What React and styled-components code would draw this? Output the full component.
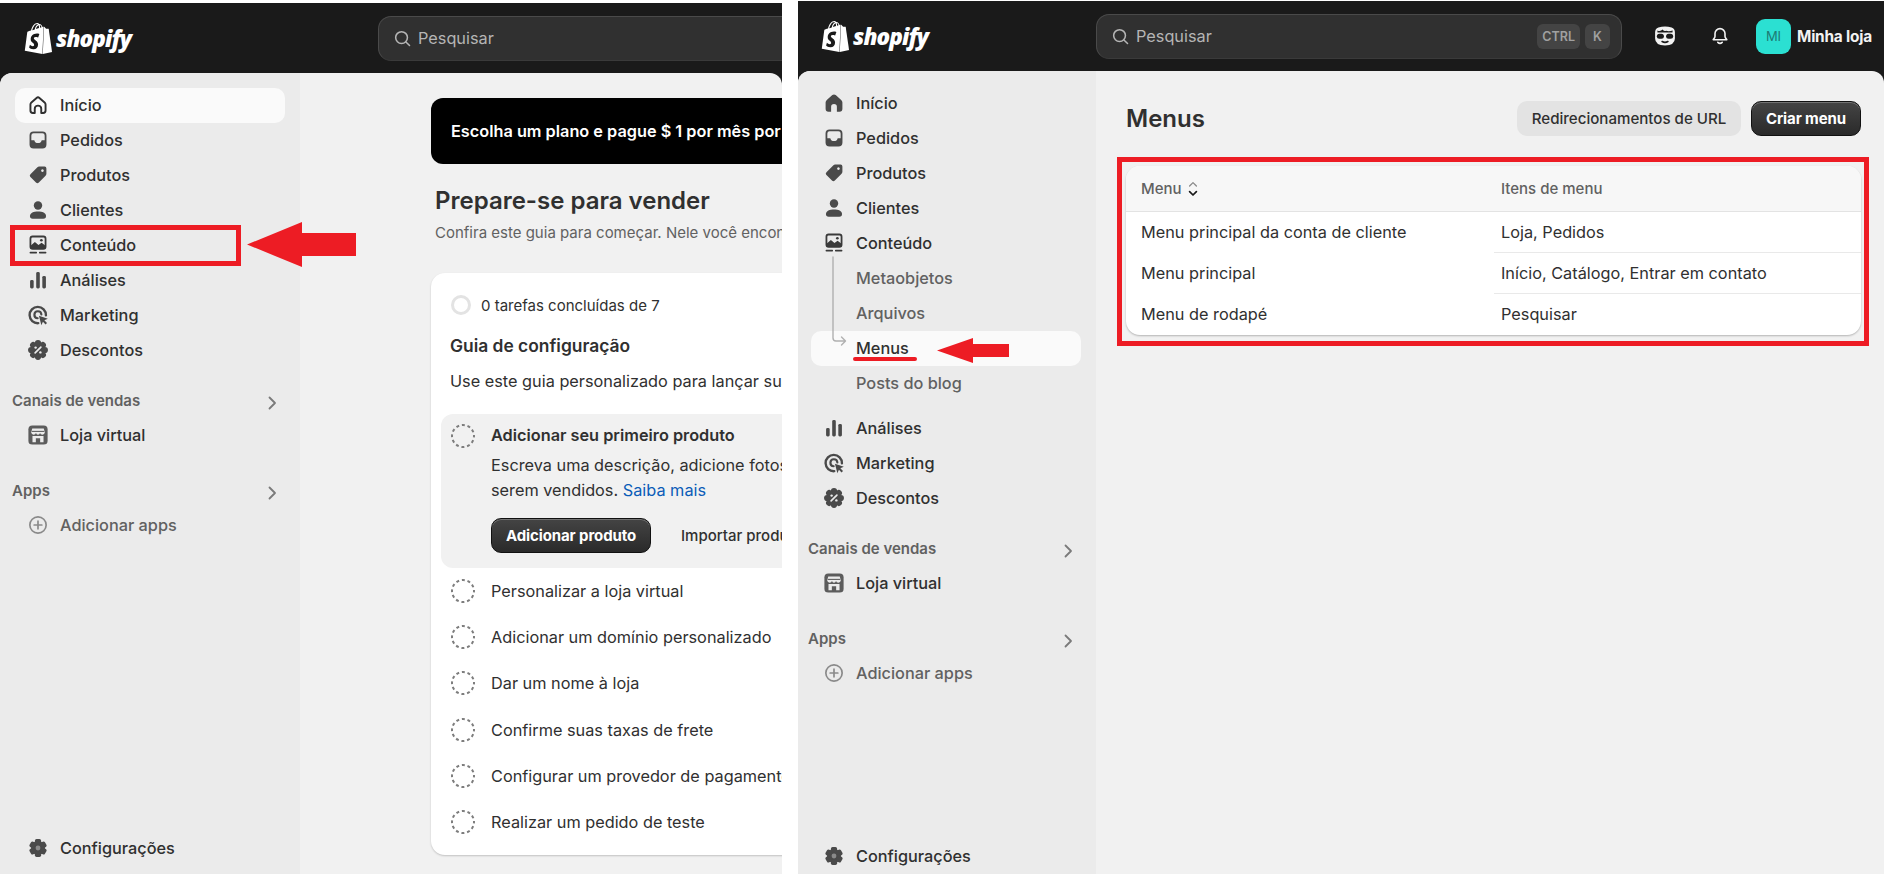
import React from "react";
import styled, { createGlobalStyle } from "styled-components";
import { SiShopify } from "react-icons/si";

const INK = "#303030";
const MUTED = "#616161";
const RED = "#ed1c24";

////////////////////////// ICONS //////////////////////////
const Svg = ({ size = 24, children, color = "#4a4a4a" }) => (
  <svg width={size} height={size} viewBox="0 0 20 20" fill={color} stroke="none">
    {children}
  </svg>
);

const HomeLine = () => (
  <Svg color={INK}>
    <path
      d="M3.7 9.6q0-1 .8-1.7l4.3-3.8q1.2-1 2.4 0l4.3 3.8q.8.7.8 1.7v5q0 2-2 2h-1.6v-3.4a2.5 2.5 0 0 0-5.4 0v3.4H5.7q-2 0-2-2z"
      fill="none"
      stroke={INK}
      strokeWidth="1.6"
      strokeLinejoin="round"
    />
  </Svg>
);
const HomeFill = () => (
  <Svg>
    <path d="M3 9.6q0-1.3 1-2.2l4.6-4q1.4-1.1 2.8 0l4.6 4q1 .9 1 2.2v5.2q0 2.4-2.4 2.4h-2.2v-4a2.4 2.4 0 0 0-4.8 0v4H5.4Q3 17.2 3 14.8z" />
  </Svg>
);
const Orders = () => (
  <Svg>
    <rect x="3.7" y="3.7" width="12.6" height="12.6" rx="2.6" fill="none" stroke="#4a4a4a" strokeWidth="1.5" />
    <path d="M3.5 10.2h3.4q.6 2.4 3.1 2.4t3.1-2.4h3.4V14q0 2.5-2.5 2.5H6Q3.5 16.5 3.5 14z" />
  </Svg>
);
const Tag = () => (
  <Svg>
    <path
      fillRule="evenodd"
      d="M11 3h4.5Q17 3 17 4.5V9q0 1-.7 1.7l-5.6 5.6q-1.2 1.2-2.4 0l-4.6-4.6q-1.2-1.2 0-2.4l5.6-5.6Q10 3 11 3zm2.7 2.3a1.1 1.1 0 1 0 .01 0z"
    />
  </Svg>
);
const Person = () => (
  <Svg>
    <circle cx="10" cy="6.3" r="3.5" />
    <path d="M3.3 15c0-2.6 3.1-3.8 6.7-3.8s6.7 1.2 6.7 3.8q0 2.2-2.2 2.2h-9Q3.3 17.2 3.3 15z" />
  </Svg>
);
const Content = ({ color = "#3a3a3a" }) => (
  <Svg color={color}>
    <rect x="3.7" y="2.9" width="12.6" height="10.4" rx="1.8" fill="none" stroke={color} strokeWidth="1.5" />
    <path d="M4 10.4l3.4-2.8 3 2.4 2.6-1.8 3 2.2v2.4H4z" />
    <circle cx="12.8" cy="6" r="1.1" />
    <rect x="3" y="15.6" width="6.2" height="1.5" rx=".6" />
    <rect x="10.8" y="15.6" width="6.2" height="1.5" rx=".6" />
  </Svg>
);
const Bars = () => (
  <Svg>
    <rect x="3.4" y="10" width="3" height="7" rx="1.2" />
    <rect x="8.5" y="3.4" width="3" height="13.6" rx="1.2" />
    <rect x="13.6" y="6.6" width="3" height="10.4" rx="1.2" />
  </Svg>
);
const Target = () => (
  <Svg>
    <path d="M16.6 10.2a6.8 6.8 0 1 0-6.4 6.6" fill="none" stroke="#4a4a4a" strokeWidth="2" strokeLinecap="round" />
    <path d="M12.8 9.6a2.9 2.9 0 1 0-3.1 3.1" fill="none" stroke="#4a4a4a" strokeWidth="1.8" strokeLinecap="round" />
    <path d="M10.8 10.6l7.4 2.5-2.9 1.3 2.2 2.3-1.2 1.2-2.2-2.3-1.3 2.9z" />
  </Svg>
);
const Discount = () => (
  <Svg>
    <circle cx="10" cy="10" r="6.4" />
    {[0, 45, 90, 135, 180, 225, 270, 315].map(a => (
      <circle key={a} cx="10" cy="4.3" r="2.6" transform={`rotate(${a} 10 10)`} />
    ))}
    <path d="M12.4 7.6l-4.8 4.8" stroke="#ebebeb" strokeWidth="1.4" strokeLinecap="round" />
    <circle cx="8" cy="8" r="1" fill="#ebebeb" />
    <circle cx="12" cy="12" r="1" fill="#ebebeb" />
  </Svg>
);
const Gear = () => (
  <Svg>
    <circle cx="10" cy="10" r="5.8" />
    {[0, 60, 120, 180, 240, 300].map(a => (
      <rect key={a} x="7.4" y="2.6" width="5.2" height="4.6" rx="1.4" transform={`rotate(${a} 10 10)`} />
    ))}
    <circle cx="10" cy="10" r="2" fill="#8a8a8a" />
  </Svg>
);
const Store = () => (
  <Svg>
    <rect x="2" y="2" width="16" height="16" rx="3.2" fill="#5c5c5c" />
    <path d="M5.2 4.6h9.6l.9 3.4q-.3 1.7-2 1.7t-2-1.3q-.5 1.3-1.7 1.3T8.3 8.4q-.4 1.3-2 1.3T4.3 8z" fill="#ebebeb" />
    <path d="M5.4 10.8h9.2v5.2h-2.8v-3.2H8.2V16H5.4z" fill="#ebebeb" />
    <path d="M4.8 7h10.4" stroke="#5c5c5c" strokeWidth=".9" />
  </Svg>
);
const PlusCircle = () => (
  <Svg>
    <circle cx="10" cy="10" r="6.8" fill="none" stroke="#8a8a8a" strokeWidth="1.4" />
    <path d="M10 6.8v6.4M6.8 10h6.4" stroke="#8a8a8a" strokeWidth="1.4" strokeLinecap="round" />
  </Svg>
);
const Chevron = () => (
  <svg width="12" height="16" viewBox="0 0 12 16" fill="none" stroke="#7a7a7a" strokeWidth="1.8" strokeLinecap="round" strokeLinejoin="round">
    <path d="M3.5 2.5L9 8l-5.5 5.5" />
  </svg>
);
const SearchGlyph = () => (
  <svg width="19" height="19" viewBox="0 0 20 20" fill="none" stroke="#b5b5b5" strokeWidth="1.6" strokeLinecap="round">
    <circle cx="9" cy="9" r="6.2" />
    <path d="M13.6 13.6L17.4 17.4" />
  </svg>
);
const Face = () => (
  <svg width="22" height="22" viewBox="0 0 20 20">
    <path d="M4 2.2q6-1.6 12 0 3 1 3 4.4v5.6q0 6-9 6.4-9-.4-9-6.4V6.6q0-3.4 3-4.4z" fill="#f2f2f2" />
    <path d="M3 4.9q2.8 1.4 4.8-.7 1 1.8 3.2 1 2.6 1 6-.3l-.2 1.9H3.2z" fill="#1a1a1a" />
    <rect x="2.6" y="8" width="6.4" height="4.6" rx="2.3" fill="#1a1a1a" />
    <rect x="11" y="8" width="6.4" height="4.6" rx="2.3" fill="#1a1a1a" />
    <path d="M7.4 15q2.6 1.5 5.2 0" stroke="#1a1a1a" strokeWidth="1.5" fill="none" strokeLinecap="round" />
  </svg>
);
const Bell = () => (
  <svg width="20" height="20" viewBox="0 0 20 20" fill="none" stroke="#f2f2f2" strokeWidth="1.6" strokeLinejoin="round" strokeLinecap="round">
    <path d="M10 2.6a5 5 0 0 0-5 5v2.6q0 1-.8 2l-1 1.5h13.6l-1-1.5q-.8-1-.8-2V7.6a5 5 0 0 0-5-5z" />
    <path d="M7.8 16.4q2.2 2 4.4 0" />
  </svg>
);
const Sort = () => (
  <svg width="12" height="18" viewBox="0 0 12 18" fill="none" strokeLinecap="round" strokeLinejoin="round">
    <path d="M2.6 6L6 2.6 9.4 6" stroke="#8a8a8a" strokeWidth="1.3" />
    <path d="M2.6 11.6L6 15l3.4-3.4" stroke="#1a1a1a" strokeWidth="1.7" />
  </svg>
);
const Dashed = () => (
  <svg width="26" height="26" viewBox="0 0 26 26" fill="none" stroke="#7d7d7d" strokeWidth="2">
    <circle cx="13" cy="13" r="11" strokeDasharray="3 2.76" strokeDashoffset="1.5" />
  </svg>
);

////////////////////////// DATA //////////////////////////
const topItems = [
  ["Pedidos", Orders],
  ["Produtos", Tag],
  ["Clientes", Person],
];
const lowerItems = [
  ["Análises", Bars],
  ["Marketing", Target],
  ["Descontos", Discount],
];
const tasks = [
  "Personalizar a loja virtual",
  "Adicionar um domínio personalizado",
  "Dar um nome à loja",
  "Confirme suas taxas de frete",
  "Configurar um provedor de pagamento",
  "Realizar um pedido de teste",
];
const menus = [
  ["Menu principal da conta de cliente", "Loja, Pedidos"],
  ["Menu principal", "Início, Catálogo, Entrar em contato"],
  ["Menu de rodapé", "Pesquisar"],
];

////////////////////////// PARTS //////////////////////////
const Brand = ({ width, inset }) => (
  <BrandSlot $width={width} $inset={inset}>
    <SiShopify size={31} color="#fff" />
    <Wordmark>shopify</Wordmark>
  </BrandSlot>
);

const NavRow = ({ icon: Icon, children, active }) => (
  <NavItem $active={active}>
    <IconSlot>
      <Icon />
    </IconSlot>
    {children}
  </NavItem>
);

const Channels = () => (
  <>
    <SectionHead>
      Canais de vendas
      <Chevron />
    </SectionHead>
    <NavRow icon={Store}>Loja virtual</NavRow>
    <SectionHead $apps>
      Apps
      <Chevron />
    </SectionHead>
    <NavRow icon={PlusCircle}>
      <Faded>Adicionar apps</Faded>
    </NavRow>
    <Spacer />
    <NavRow icon={Gear}>Configurações</NavRow>
  </>
);

const Arrow = ({ width, height, neck, shaftTop, shaftBottom }) => (
  <svg width={width} height={height} viewBox={`0 0 ${width} ${height}`} fill={RED}>
    <polygon
      points={`0,${height / 2} ${neck},0 ${neck},${shaftTop} ${width},${shaftTop} ${width},${shaftBottom} ${neck},${shaftBottom} ${neck},${height}`}
    />
  </svg>
);

const GuidePanel = () => (
  <Panel $width="782px" $top="3px">
    <TopBar>
      <Brand width="378px" inset="23px" />
      <SearchBox $width="526px">
        <SearchGlyph />
        Pesquisar
      </SearchBox>
    </TopBar>
    <Body>
      <Sidebar $width="300px" $inset="15px" $bottom="8px">
        <NavRow icon={HomeLine} active>
          Início
        </NavRow>
        {topItems.map(([label, icon]) => (
          <NavRow key={label} icon={icon}>
            {label}
          </NavRow>
        ))}
        <NavRow icon={Content}>Conteúdo</NavRow>
        {lowerItems.map(([label, icon]) => (
          <NavRow key={label} icon={icon}>
            {label}
          </NavRow>
        ))}
        <Channels />
      </Sidebar>
      <GuideMain>
        <Banner>Escolha um plano e pague $ 1 por mês por 3 meses</Banner>
        <Heading>Prepare-se para vender</Heading>
        <Lead>Confira este guia para começar. Nele você encontrará tudo o que precisa</Lead>
        <GuideCard>
          <Progress>
            <ProgressRing />0 tarefas concluídas de 7
          </Progress>
          <GuideTitle>Guia de configuração</GuideTitle>
          <GuideIntro>Use este guia personalizado para lançar sua loja virtual</GuideIntro>
          <OpenTask>
            <Dashed />
            <div>
              <TaskTitle>Adicionar seu primeiro produto</TaskTitle>
              <TaskText>
                Escreva uma descrição, adicione fotos e defina o preço dos produtos a
                <br />
                serem vendidos. <TaskLink>Saiba mais</TaskLink>
              </TaskText>
              <TaskActions>
                <DarkButton $width="160px">Adicionar produto</DarkButton>
                <PlainAction>Importar produtos</PlainAction>
              </TaskActions>
            </div>
          </OpenTask>
          {tasks.map(task => (
            <Task key={task}>
              <Dashed />
              {task}
            </Task>
          ))}
        </GuideCard>
      </GuideMain>
    </Body>
    <RedFrame $left="10px" $top="222px" $width="231px" $height="41px" />
    <Overlay $left="247px" $top="219px">
      <Arrow width={109} height={45} neck={55} shaftTop={11} shaftBottom={34} />
    </Overlay>
  </Panel>
);

const MenusPanel = () => (
  <Panel $width="1086px" $top="1px">
    <TopBar>
      <Brand width="298px" inset="22px" />
      <SearchBox $width="526px">
        <SearchGlyph />
        Pesquisar
        <Keys>
          <Key>CTRL</Key>
          <Key>K</Key>
        </Keys>
      </SearchBox>
      <Account>
        <HeaderIcon $gap="34px">
          <Face />
        </HeaderIcon>
        <HeaderIcon $gap="26px">
          <Bell />
        </HeaderIcon>
        <Avatar>MI</Avatar>
        <StoreName>Minha loja</StoreName>
      </Account>
    </TopBar>
    <Body>
      <Sidebar $width="298px" $inset="13px" $bottom="0">
        <NavRow icon={HomeFill}>Início</NavRow>
        {topItems.map(([label, icon]) => (
          <NavRow key={label} icon={icon}>
            {label}
          </NavRow>
        ))}
        <NavRow icon={Content}>Conteúdo</NavRow>
        <SubNav>
          <Tree width="24" height="90" viewBox="0 0 24 90" fill="none" stroke="#b0b0b0" strokeWidth="1.4" strokeLinecap="round" strokeLinejoin="round">
            <path d="M9 1v81q0 3 3 3h9M17.5 81l4 4-4 4" />
          </Tree>
          <SubItem>Metaobjetos</SubItem>
          <SubItem>Arquivos</SubItem>
          <SubItem $active>Menus</SubItem>
          <SubItem>Posts do blog</SubItem>
        </SubNav>
        {lowerItems.map(([label, icon]) => (
          <NavRow key={label} icon={icon}>
            {label}
          </NavRow>
        ))}
        <Channels />
      </Sidebar>
      <MenusMain>
        <PageHead>
          <Heading as="h2" $flush>
            Menus
          </Heading>
          <HeadActions>
            <GreyButton>Redirecionamentos de URL</GreyButton>
            <DarkButton $width="110px">Criar menu</DarkButton>
          </HeadActions>
        </PageHead>
        <TableCard>
          <HeadRow>
            <HeadCell>
              Menu <Sort />
            </HeadCell>
            <HeadCell $second>Itens de menu</HeadCell>
          </HeadRow>
          {menus.map(([name, items], i) => (
            <Row key={name}>
              <NameCell>{name}</NameCell>
              <ItemsCell $line={i < menus.length - 1}>{items}</ItemsCell>
            </Row>
          ))}
        </TableCard>
      </MenusMain>
    </Body>
    <RedFrame $left="319px" $top="156px" $width="752px" $height="189px" />
    <Overlay $left="139px" $top="337px">
      <Arrow width={72} height={25} neck={36} shaftTop={6} shaftBottom={19} />
    </Overlay>
    <Underline />
  </Panel>
);

export default function App() {
  return (
    <Screen>
      <GlobalStyle />
      <GuidePanel />
      <MenusPanel />
    </Screen>
  );
}

////////////////////////// CSS //////////////////////////
const GlobalStyle = createGlobalStyle`
  html, body {
    margin: 0;
    background: #fff;
    overflow: hidden;
  }
  * {
    box-sizing: border-box;
  }
`;

const Screen = styled.div`
  display: flex;
  gap: 16px;
  width: 1884px;
  height: 874px;
  overflow: hidden;
  font-family: Inter, "Liberation Sans", sans-serif;
  font-size: 16.3px;
  color: ${INK};
`;

const Panel = styled.div`
  position: relative;
  flex: none;
  display: flex;
  flex-direction: column;
  width: ${p => p.$width};
  margin-top: ${p => p.$top};
  overflow: hidden;
  background: #1a1a1a;
`;

const TopBar = styled.div`
  flex: none;
  display: flex;
  align-items: center;
  height: 70px;
`;

const BrandSlot = styled.div`
  flex: none;
  display: flex;
  align-items: center;
  gap: 2px;
  width: ${p => p.$width};
  padding-left: ${p => p.$inset};
`;

const Wordmark = styled.span`
  font-family: "Open Sans", sans-serif;
  font-style: italic;
  font-weight: 800;
  font-size: 22.5px;
  letter-spacing: -0.9px;
  color: #fff;
`;

const SearchBox = styled.div`
  flex: none;
  display: flex;
  align-items: center;
  gap: 6px;
  width: ${p => p.$width};
  height: 45px;
  padding: 0 11px 0 14px;
  border: 1px solid #4a4a4a;
  border-bottom-color: #3a3a3a;
  border-radius: 13px;
  background: #303030;
  color: #b5b5b5;
`;

const Keys = styled.div`
  display: flex;
  gap: 5px;
  margin-left: auto;
`;

const Key = styled.span`
  display: flex;
  align-items: center;
  justify-content: center;
  min-width: 25px;
  height: 25px;
  padding: 0 5px;
  border-radius: 6px;
  background: #444;
  color: #a0a0a0;
  font-size: 12.5px;
  font-weight: 600;
`;

const Account = styled.div`
  display: flex;
  align-items: center;
  flex: 1;
  padding-left: 32px;
`;

const HeaderIcon = styled.span`
  display: flex;
  margin-right: ${p => p.$gap};
`;

const Avatar = styled.span`
  display: flex;
  align-items: center;
  justify-content: center;
  width: 35px;
  height: 35px;
  border-radius: 9px;
  background: #2be0d2;
  color: #1d7a74;
  font-size: 13px;
`;

const StoreName = styled.span`
  margin-left: 6px;
  color: #f2f2f2;
  font-size: 15.4px;
  font-weight: 700;
  letter-spacing: -0.2px;
  white-space: nowrap;
`;

const Body = styled.div`
  flex: 1;
  min-height: 0;
  display: flex;
  overflow: hidden;
  border-radius: 12px 12px 0 0;
  background: #f1f1f1;
`;

const Sidebar = styled.nav`
  flex: none;
  display: flex;
  flex-direction: column;
  width: ${p => p.$width};
  padding: 15px 15px ${p => p.$bottom} ${p => p.$inset};
  background: #ebebeb;
`;

const NavItem = styled.div`
  flex: none;
  display: flex;
  align-items: center;
  height: 35px;
  padding-bottom: 2px;
  border-radius: 10px;
  background: ${p => (p.$active ? "#fafafa" : "transparent")};
  font-weight: 500;
`;

const IconSlot = styled.span`
  flex: none;
  display: flex;
  justify-content: center;
  width: 45px;
`;

const Faded = styled.span`
  color: ${MUTED};
`;

const SectionHead = styled.div`
  flex: none;
  display: flex;
  align-items: center;
  justify-content: space-between;
  height: 35px;
  margin: ${p => (p.$apps ? "20px" : "15px")} 7px 0 -3px;
  color: ${MUTED};
  font-size: 15px;
  font-weight: 600;
  svg {
    margin-top: 4px;
  }
`;

const Spacer = styled.div`
  flex: 1;
  margin-bottom: -1px;
`;

const SubNav = styled.div`
  position: relative;
  flex: none;
  margin-bottom: 10px;
`;

const Tree = styled.svg`
  position: absolute;
  left: 13px;
  top: -5px;
`;

const SubItem = styled.div`
  display: flex;
  align-items: center;
  height: 35px;
  padding: 0 0 2px 45px;
  border-radius: 10px;
  background: ${p => (p.$active ? "#fafafa" : "transparent")};
  color: ${p => (p.$active ? INK : MUTED)};
  font-weight: 500;
`;

const GuideMain = styled.main`
  flex: none;
  width: 800px;
  padding: 25px 0 0 131px;
`;

const Banner = styled.div`
  display: flex;
  align-items: center;
  height: 66px;
  padding-left: 20px;
  border-radius: 12px;
  background: #000;
  color: #fff;
  font-weight: 600;
  white-space: nowrap;
`;

const Heading = styled.h1`
  margin: ${p => (p.$flush ? "2px 0 0" : "22px 0 0 4px")};
  color: ${INK};
  font-size: 24px;
  font-weight: 600;
  line-height: 30px;
`;

const Lead = styled.p`
  margin: 7px 0 0 4px;
  color: ${MUTED};
  font-size: 15px;
  line-height: 20px;
  white-space: nowrap;
`;

const GuideCard = styled.section`
  margin-top: 30px;
  height: 582px;
  padding: 0 10px;
  border-radius: 14px;
  background: #fff;
  box-shadow: 0 1px 2px rgba(0, 0, 0, 0.2);
  white-space: nowrap;
`;

const Progress = styled.div`
  display: flex;
  align-items: center;
  gap: 10px;
  height: 64px;
  padding-left: 10px;
  font-size: 15px;
`;

const ProgressRing = styled.span`
  width: 20px;
  height: 20px;
  border: 3px solid #e3e3e3;
  border-radius: 50%;
`;

const GuideTitle = styled.h3`
  margin: -1px 0 0;
  padding-left: 9px;
  font-size: 17.4px;
  font-weight: 600;
  line-height: 20px;
`;

const GuideIntro = styled.p`
  margin: 15px 0 0;
  padding-left: 9px;
  line-height: 20px;
`;

const OpenTask = styled.div`
  display: flex;
  gap: 15px;
  height: 154px;
  margin-top: 23px;
  padding: 9px 0 0 9px;
  border-radius: 12px;
  background: #f1f1f1;
`;

const TaskTitle = styled.div`
  margin-top: -1px;
  font-weight: 600;
  line-height: 26px;
`;

const TaskText = styled.div`
  margin-top: 5px;
  line-height: 25px;
`;

const TaskLink = styled.span`
  color: #0b5cb8;
`;

const TaskActions = styled.div`
  display: flex;
  align-items: center;
  gap: 30px;
  margin-top: 15px;
`;

const DarkButton = styled.button`
  width: ${p => p.$width};
  height: 35px;
  padding: 0;
  border: 1px solid #111;
  border-radius: 10px;
  background: linear-gradient(#444, #2a2a2a);
  box-shadow: inset 0 1px 0 rgba(255, 255, 255, 0.25);
  color: #fff;
  font-family: inherit;
  font-size: 15px;
  font-weight: 650;
  letter-spacing: -0.1px;
`;

const PlainAction = styled.span`
  font-size: 15px;
  font-weight: 500;
`;

const Task = styled.div`
  display: flex;
  align-items: center;
  gap: 15px;
  height: 46.2px;
  padding-left: 9px;
`;

const MenusMain = styled.main`
  flex: 1;
  padding: 30px 23px 0 30px;
`;

const PageHead = styled.div`
  display: flex;
  align-items: center;
  justify-content: space-between;
  height: 34px;
`;

const HeadActions = styled.div`
  display: flex;
  gap: 10px;
`;

const GreyButton = styled.button`
  width: 224px;
  height: 35px;
  padding: 0;
  border: 0;
  border-radius: 10px;
  background: #e3e3e3;
  color: ${INK};
  font-family: inherit;
  font-size: 15.1px;
  font-weight: 500;
`;

const TableCard = styled.section`
  margin-top: 31px;
  overflow: hidden;
  border-radius: 14px;
  background: #fff;
  box-shadow: 0 1px 2px rgba(0, 0, 0, 0.25);
`;

const HeadRow = styled.div`
  display: grid;
  grid-template-columns: 368px 1fr;
  height: 46px;
  border-bottom: 1px solid #e3e3e3;
  background: #f7f7f7;
`;

const HeadCell = styled.div`
  display: flex;
  align-items: center;
  gap: 5px;
  padding-left: ${p => (p.$second ? "7px" : "15px")};
  color: ${MUTED};
  font-size: 15px;
  font-weight: 500;
`;

const Row = styled.div`
  display: grid;
  grid-template-columns: 368px 1fr;
  height: 41px;
`;

const NameCell = styled.div`
  display: flex;
  align-items: center;
  padding: 0 0 2px 15px;
`;

const ItemsCell = styled.div`
  display: flex;
  align-items: center;
  padding: 0 0 ${p => (p.$line ? "0" : "2px")} 7px;
  border-bottom: ${p => (p.$line ? "1px solid #e9e9e9" : "0")};
`;

const RedFrame = styled.div`
  position: absolute;
  left: ${p => p.$left};
  top: ${p => p.$top};
  width: ${p => p.$width};
  height: ${p => p.$height};
  border: 5px solid ${RED};
  pointer-events: none;
`;

const Overlay = styled.div`
  position: absolute;
  left: ${p => p.$left};
  top: ${p => p.$top};
  display: flex;
`;

const Underline = styled.div`
  position: absolute;
  left: 55px;
  top: 356px;
  width: 64px;
  height: 4px;
  border-radius: 2px;
  background: ${RED};
`;
